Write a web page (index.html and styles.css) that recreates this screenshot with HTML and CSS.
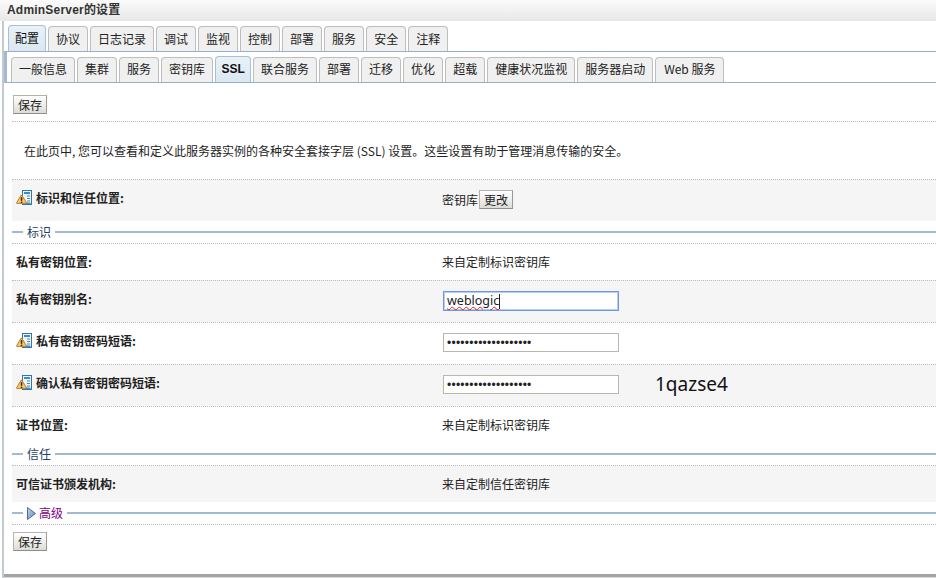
FILE: index.html
```html
<!DOCTYPE html>
<html lang="zh-CN">
<head>
<meta charset="utf-8">
<title>AdminServer的设置</title>
<link rel="stylesheet" href="styles.css">
</head>
<body>
<svg class="defs" width="0" height="0" aria-hidden="true">
  <defs>
    <symbol id="required" viewBox="0 0 16 16">
      <rect x="6.5" y="0.5" width="9" height="14" fill="#eef6fb" stroke="#2f78ad"/>
      <rect x="8" y="2" width="6" height="2" fill="#3f8cc4"/>
      <rect x="11" y="5.5" width="3" height="1" fill="#4f87b0"/>
      <rect x="11" y="8" width="3" height="1" fill="#4f87b0"/>
      <rect x="11" y="10.5" width="3" height="1" fill="#4f87b0"/>
      <rect x="10" y="12.5" width="4.5" height="1.5" fill="#3f8cc4"/>
      <path d="M5.5 6 L9.6 12.8 L1.4 12.8 Z" fill="#f7cd6c" stroke="#c07a2c" stroke-width="2.4" stroke-linejoin="round"/>
      <path d="M5.5 6 L9.6 12.8 L1.4 12.8 Z" fill="#f7cd6c" stroke="#f7cd6c" stroke-width="0.6" stroke-linejoin="round"/>
      <rect x="4.8" y="7.2" width="1.5" height="3.6" fill="#3f2b08"/>
      <rect x="4.8" y="11.6" width="1.5" height="1.5" fill="#3f2b08"/>
    </symbol>
    <linearGradient id="arrow-fill" x1="0" y1="0" x2="1" y2="1">
      <stop offset="0" stop-color="#c6d6ea"/>
      <stop offset="1" stop-color="#5f86b8"/>
    </linearGradient>
  </defs>
</svg>
<div class="page">
  <h1 class="title">AdminServer的设置</h1>
  <div class="main">
    <nav class="tabs tabs-top">
      <a class="tab active">配置</a>
      <a class="tab">协议</a>
      <a class="tab">日志记录</a>
      <a class="tab">调试</a>
      <a class="tab">监视</a>
      <a class="tab">控制</a>
      <a class="tab">部署</a>
      <a class="tab">服务</a>
      <a class="tab">安全</a>
      <a class="tab">注释</a>
    </nav>
    <nav class="tabs tabs-sub">
      <a class="tab">一般信息</a>
      <a class="tab">集群</a>
      <a class="tab">服务</a>
      <a class="tab">密钥库</a>
      <a class="tab active ssl">SSL</a>
      <a class="tab">联合服务</a>
      <a class="tab">部署</a>
      <a class="tab">迁移</a>
      <a class="tab">优化</a>
      <a class="tab">超载</a>
      <a class="tab">健康状况监视</a>
      <a class="tab">服务器启动</a>
      <a class="tab last">Web 服务</a>
    </nav>
    <div class="content">
      <div class="toolbar"><button class="btn">保存</button></div>
      <p class="intro">在此页中, 您可以查看和定义此服务器实例的各种安全套接字层 (SSL) 设置。这些设置有助于管理消息传输的安全。</p>

      <div class="row shaded h42">
        <div class="label with-icon"><svg class="icon"><use href="#required"/></svg>标识和信任位置:</div>
        <div class="value">密钥库<button class="btn change">更改</button></div>
      </div>

      <div class="section"><span class="section-name">标识</span></div>

      <div class="row h37">
        <div class="label">私有密钥位置:</div>
        <div class="value">来自定制标识密钥库</div>
      </div>
      <div class="row shaded h42">
        <div class="label">私有密钥别名:</div>
        <div class="value"><div class="field focused"><span class="typed">weblogic</span><span class="caret"></span></div></div>
      </div>
      <div class="row h42">
        <div class="label with-icon"><svg class="icon"><use href="#required"/></svg>私有密钥密码短语:</div>
        <div class="value"><input class="field" type="password" value="1234567890123456789"></div>
      </div>
      <div class="row shaded h42">
        <div class="label with-icon"><svg class="icon"><use href="#required"/></svg>确认私有密钥密码短语:</div>
        <div class="value"><input class="field" type="password" value="1234567890123456789"><span class="note">1qazse4</span></div>
      </div>
      <div class="row h37">
        <div class="label">证书位置:</div>
        <div class="value">来自定制标识密钥库</div>
      </div>

      <div class="section"><span class="section-name">信任</span></div>

      <div class="row shaded h37">
        <div class="label">可信证书颁发机构:</div>
        <div class="value">来自定制信任密钥库</div>
      </div>

      <div class="section advanced">
        <span class="section-name">
          <svg class="arrow" width="9" height="13" viewBox="0 0 9 13"><path d="M0.5 0.5 L8.5 6.5 L0.5 12.5 Z" fill="url(#arrow-fill)" stroke="#4a6f9f"/></svg>高级
        </span>
      </div>

      <div class="toolbar bottom"><button class="btn">保存</button></div>
    </div>
  </div>
</div>
</body>
</html>
```
FILE: styles.css
```css
* { box-sizing: border-box; }

html, body {
  margin: 0;
  padding: 0;
  height: 100%;
  background: #fff;
}

body {
  font-family: "Noto Sans CJK SC", "Liberation Sans", sans-serif;
  font-size: 12px;
  color: #222;
  overflow: hidden;
}

.defs { display: block; height: 0; }

.page {
  width: 936px;
  height: 578px;
  border-left: 2px solid #c3c9d0;
  margin-left: 2px;
  position: relative;
  display: flex;
  flex-direction: column;
}

.page::after {
  content: "";
  display: block;
  position: absolute;
  left: 0;
  right: 0;
  bottom: 0;
  height: 3px;
  background: #a4a4a4;
  border-bottom: 1px solid #dcdcdc;
}

.title {
  margin: 0 0 0 -4px;
  height: 21px;
  padding: 0 0 0 7px;
  font: bold 12px/20px "Liberation Sans", "Noto Sans CJK SC", sans-serif;
  letter-spacing: 0.2px;
  color: #333;
  background: linear-gradient(#fbfbfb, #e6e7e6);
}

.main { display: flex; flex-direction: column; flex: 1; }

.tabs { display: flex; align-items: flex-end; }

.tabs-top {
  height: 30px;
  padding-left: 4px;
}

.tabs-sub {
  height: 32px;
  padding-left: 4px;
  border-top: 1px solid #93b1cf;
  border-bottom: 1px solid #93b1cf;
  border-left: 3px solid #a0bad4;
}

.tab {
  display: block;
  height: 25px;
  padding: 0 7px;
  margin-right: 2px;
  line-height: 24px;
  text-align: center;
  white-space: nowrap;
  background: #f0f0f0;
  border: 1px solid #bdbdbd;
  border-bottom: 0;
  border-radius: 4px 4px 0 0;
  color: #222;
}

.tabs-sub .tab { line-height: 22px; }

.tab.active {
  background: linear-gradient(#eaf1f7, #dae7f1);
  border-color: #a6c0da;
  height: 26px;
  padding: 0 6px;
  color: #111;
}

.tabs-sub .tab.ssl {
  width: 36px;
  padding: 0;
  font: bold 12px/24px "Liberation Sans", sans-serif;
}

.tab.last { padding: 0 8px; }

.content { padding-left: 8px; }

.toolbar {
  padding: 12px 0 8px 1px;
  height: 39px;
  border-bottom: 1px dotted #bbb;
  display: flex;
  align-items: flex-start;
}

.toolbar.bottom {
  border-top: 1px dotted #bbb;
  border-bottom: 0;
  padding-top: 7px;
}

.btn {
  height: 19px;
  width: 34px;
  padding: 0;
  font: 12px/16px "Noto Sans CJK SC", sans-serif;
  color: #222;
  background: linear-gradient(#fff, #dcdcd6);
  border: 1px solid #b4b4ac;
  border-right-color: #9a9a92;
  border-bottom-color: #8f8f88;
  border-radius: 0;
}

.intro {
  margin: 0;
  height: 57px;
  padding: 21px 0 0 12px;
  line-height: 16px;
  color: #222;
}

.row {
  display: grid;
  grid-template-columns: 430px 1fr;
  align-items: center;
  border-top: 1px dotted #bbb;
}

.row.shaded { background: #f5f5f5; }
.h37 { height: 37px; }
.h42 { height: 42px; }

.label {
  display: flex;
  align-items: center;
  padding-left: 4px;
  font-weight: 700;
  color: #222;
}

.h37 .label, .h37 .value { padding-bottom: 2px; }
.h42 .label { padding-bottom: 6px; }
.h42 .value { padding-bottom: 2px; }

.icon { width: 16px; height: 16px; margin-right: 4px; flex: none; }

.value { display: flex; align-items: center; color: #222; }

.change { margin-left: 1px; }

.field {
  display: block;
  width: 176px;
  height: 19px;
  margin: 0 0 0 1px;
  padding: 0 3px;
  background: #fff;
  border: 1px solid #b8b8b0;
  border-radius: 0;
  outline: 0;
  font: 12px/17px "Liberation Sans", sans-serif;
  letter-spacing: 0.25px;
  color: #222;
}

.field.focused {
  height: 20px;
  border: 1px solid #6f97e2;
  box-shadow: 0 0 0 1px #b8cdf2 inset;
  font: 12.5px/18px "Noto Sans", sans-serif;
  letter-spacing: 0;
  display: flex;
}

.typed { text-decoration: underline wavy #e0202a 1px; text-underline-offset: 1px; }

.caret { display: block; width: 1px; height: 15px; margin-top: 2px; background: #222; }

.note {
  margin: 0 0 2px 36px;
  font: 19px/24px "Noto Sans", sans-serif;
  color: #111;
}

.section {
  height: 22px;
  display: flex;
  align-items: center;
}

.section::before {
  content: "";
  width: 11px;
  height: 2px;
  background: #a0bad4;
  flex: none;
}

.section::after {
  content: "";
  flex: 1;
  height: 2px;
  background: #a0bad4;
}

.section-name {
  display: flex;
  align-items: center;
  padding: 0 4px;
  color: #1f3f66;
  font-size: 12px;
  line-height: 16px;
}

.advanced .section-name { color: #800080; }

.arrow { margin-right: 3px; }
```
